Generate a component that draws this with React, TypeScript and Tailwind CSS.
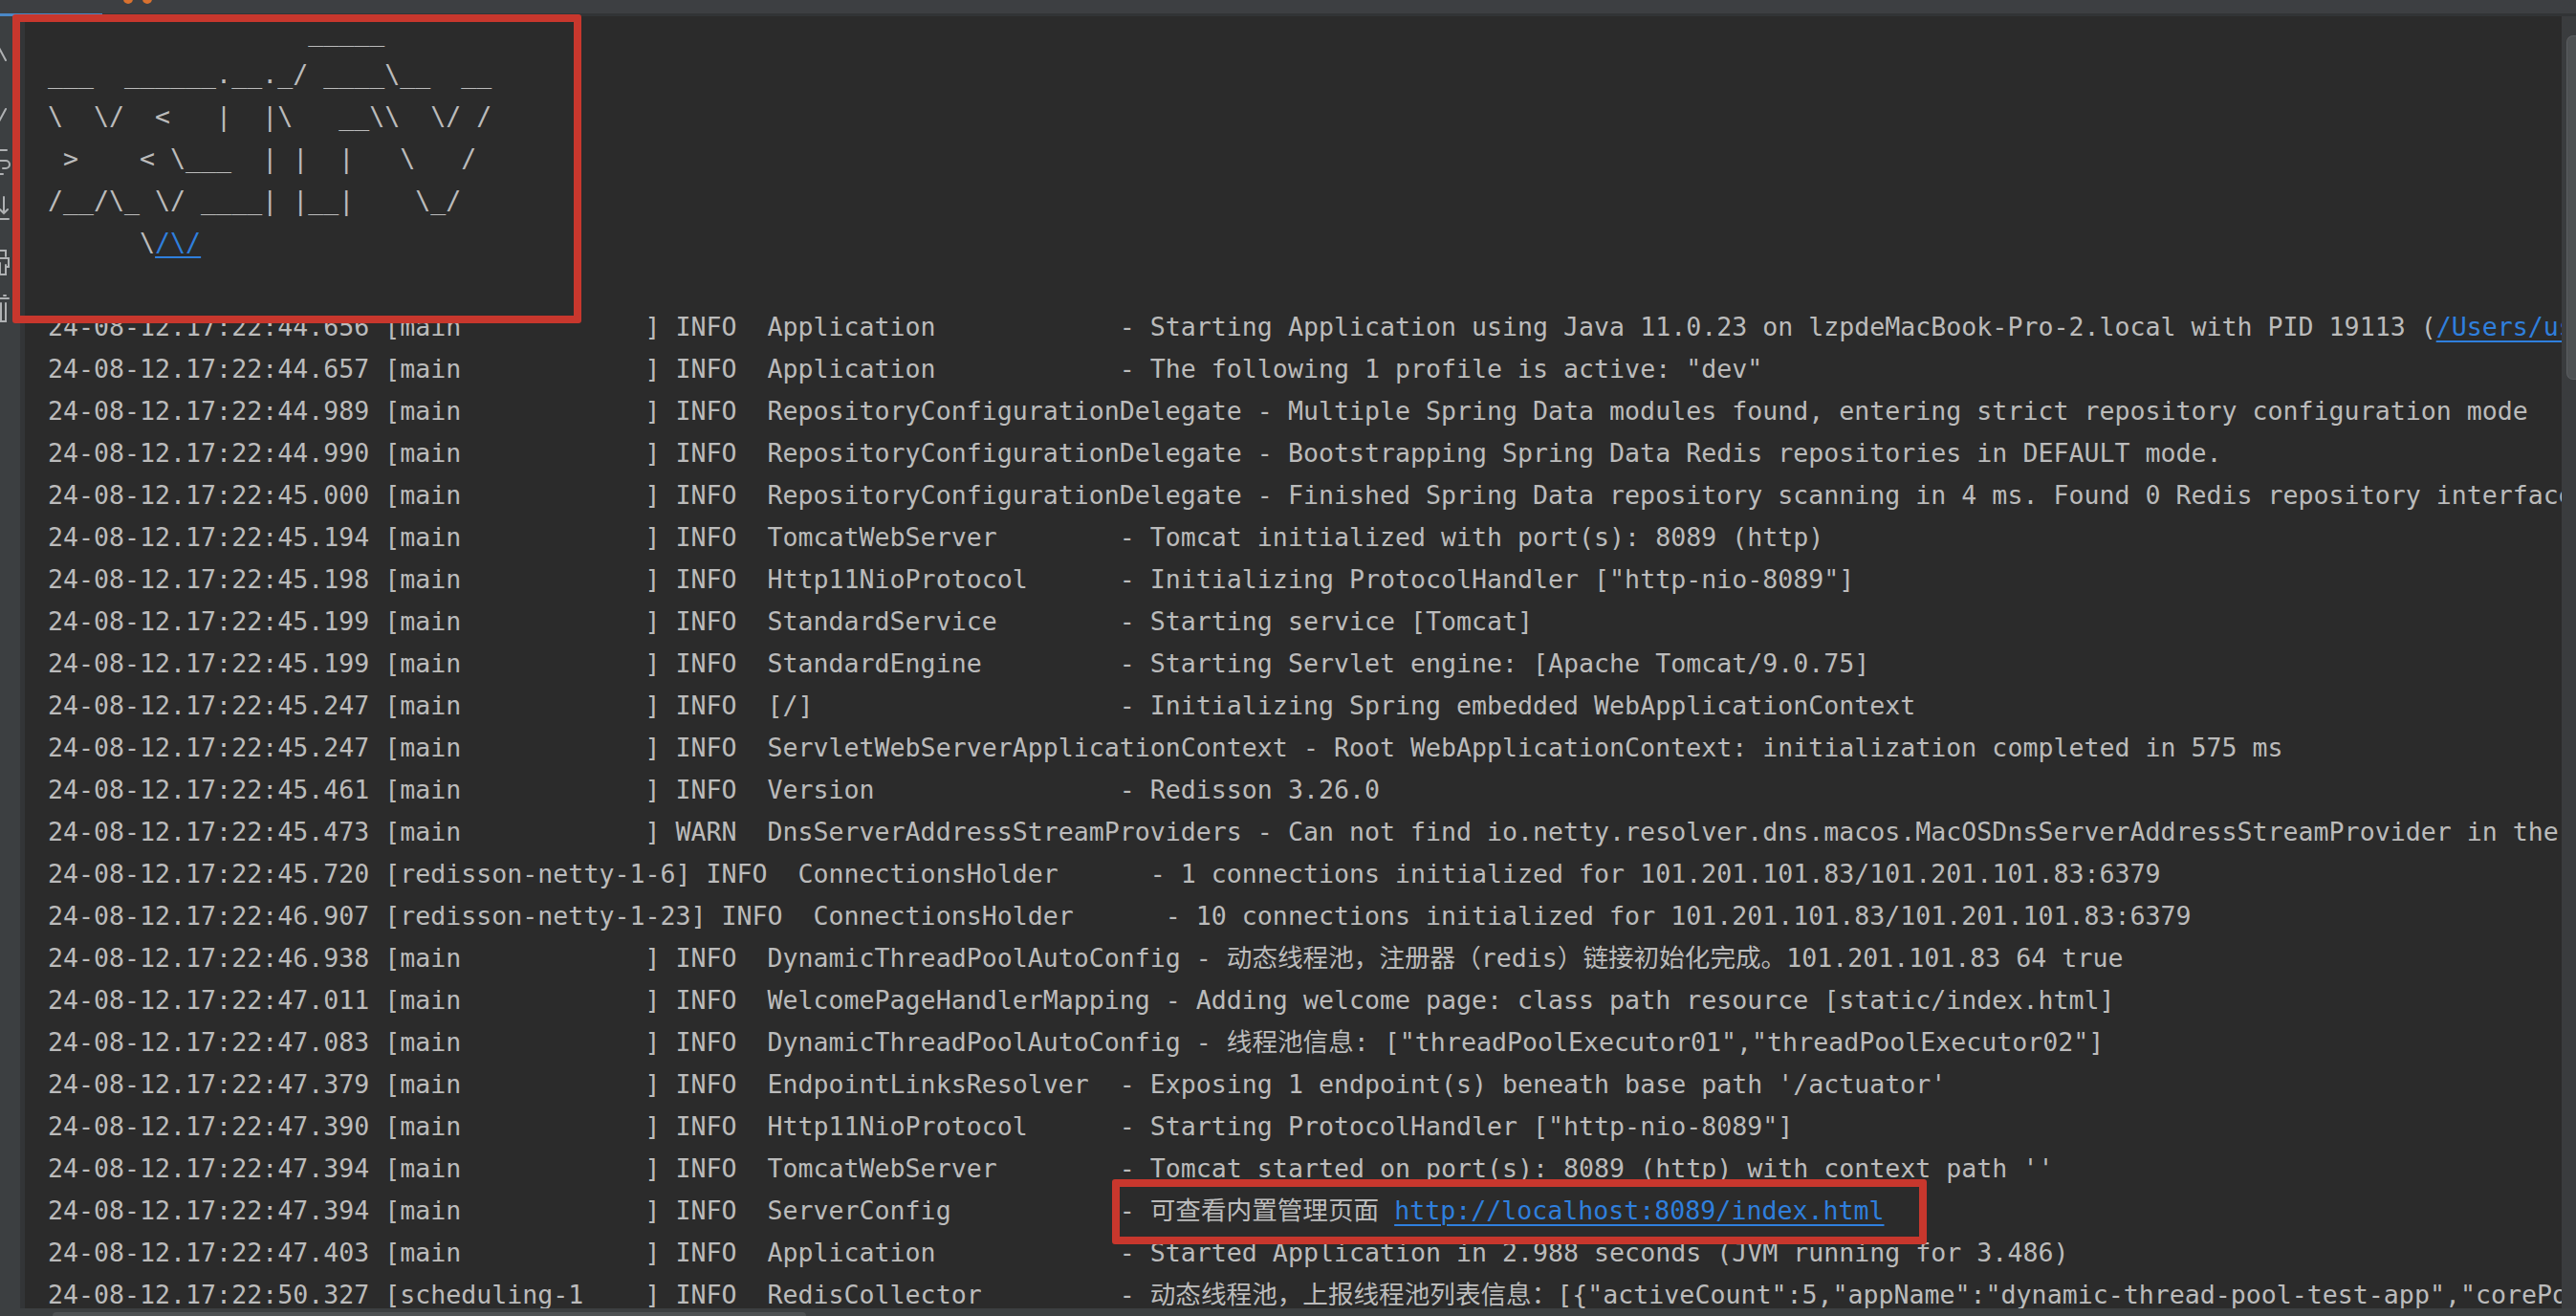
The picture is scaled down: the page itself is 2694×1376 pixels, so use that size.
import React from "react";

type Seg = string | { link: string };

const log = (
  ts: string,
  thread: string,
  level: string,
  logger: string,
  ...msg: Seg[]
): Seg[] => [
  `24-08-12.17:22:${ts} [${thread.padEnd(16)}] ${level.padEnd(5)} ${logger.padEnd(22)} - `,
  ...msg,
];

const lines: Seg[][] = [
  ["                 _____"],
  ["___  ______.__._/ ____\\__  __"],
  ["\\  \\/  <   |  |\\   __\\\\  \\/ /"],
  [" >    < \\___  | |  |   \\   /"],
  ["/__/\\_ \\/ ____| |__|    \\_/"],
  ["      \\", { link: "/\\/" }],
  [""],
  log(
    "44.656",
    "main",
    "INFO",
    "Application",
    "Starting Application using Java 11.0.23 on lzpdeMacBook-Pro-2.local with PID 19113 (",
    { link: "/Users/user/Documents/project/dynamic-thread-pool" },
    ")"
  ),
  log("44.657", "main", "INFO", "Application", 'The following 1 profile is active: "dev"'),
  log(
    "44.989",
    "main",
    "INFO",
    "RepositoryConfigurationDelegate",
    "Multiple Spring Data modules found, entering strict repository configuration mode"
  ),
  log(
    "44.990",
    "main",
    "INFO",
    "RepositoryConfigurationDelegate",
    "Bootstrapping Spring Data Redis repositories in DEFAULT mode."
  ),
  log(
    "45.000",
    "main",
    "INFO",
    "RepositoryConfigurationDelegate",
    "Finished Spring Data repository scanning in 4 ms. Found 0 Redis repository interfaces."
  ),
  log("45.194", "main", "INFO", "TomcatWebServer", "Tomcat initialized with port(s): 8089 (http)"),
  log("45.198", "main", "INFO", "Http11NioProtocol", 'Initializing ProtocolHandler ["http-nio-8089"]'),
  log("45.199", "main", "INFO", "StandardService", "Starting service [Tomcat]"),
  log("45.199", "main", "INFO", "StandardEngine", "Starting Servlet engine: [Apache Tomcat/9.0.75]"),
  log("45.247", "main", "INFO", "[/]", "Initializing Spring embedded WebApplicationContext"),
  log(
    "45.247",
    "main",
    "INFO",
    "ServletWebServerApplicationContext",
    "Root WebApplicationContext: initialization completed in 575 ms"
  ),
  log("45.461", "main", "INFO", "Version", "Redisson 3.26.0"),
  log(
    "45.473",
    "main",
    "WARN",
    "DnsServerAddressStreamProviders",
    "Can not find io.netty.resolver.dns.macos.MacOSDnsServerAddressStreamProvider in the classpath, fallback to system defaults."
  ),
  log(
    "45.720",
    "redisson-netty-1-6",
    "INFO",
    "ConnectionsHolder",
    "1 connections initialized for 101.201.101.83/101.201.101.83:6379"
  ),
  log(
    "46.907",
    "redisson-netty-1-23",
    "INFO",
    "ConnectionsHolder",
    "10 connections initialized for 101.201.101.83/101.201.101.83:6379"
  ),
  log(
    "46.938",
    "main",
    "INFO",
    "DynamicThreadPoolAutoConfig",
    "动态线程池，注册器（redis）链接初始化完成。101.201.101.83 64 true"
  ),
  log(
    "47.011",
    "main",
    "INFO",
    "WelcomePageHandlerMapping",
    "Adding welcome page: class path resource [static/index.html]"
  ),
  log(
    "47.083",
    "main",
    "INFO",
    "DynamicThreadPoolAutoConfig",
    '线程池信息: ["threadPoolExecutor01","threadPoolExecutor02"]'
  ),
  log(
    "47.379",
    "main",
    "INFO",
    "EndpointLinksResolver",
    "Exposing 1 endpoint(s) beneath base path '/actuator'"
  ),
  log("47.390", "main", "INFO", "Http11NioProtocol", 'Starting ProtocolHandler ["http-nio-8089"]'),
  log(
    "47.394",
    "main",
    "INFO",
    "TomcatWebServer",
    "Tomcat started on port(s): 8089 (http) with context path ''"
  ),
  log(
    "47.394",
    "main",
    "INFO",
    "ServerConfig",
    "可查看内置管理页面 ",
    { link: "http://localhost:8089/index.html" }
  ),
  log(
    "47.403",
    "main",
    "INFO",
    "Application",
    "Started Application in 2.988 seconds (JVM running for 3.486)"
  ),
  log(
    "50.327",
    "scheduling-1",
    "INFO",
    "RedisCollector",
    '动态线程池，上报线程池列表信息：[{"activeCount":5,"appName":"dynamic-thread-pool-test-app","corePoolSize":20,"maximumPoolSize":50}]'
  ),
];

function Toolbar() {
  return (
    <svg
      width="21"
      height="340"
      viewBox="0 0 21 340"
      fill="none"
      stroke="#afb1b3"
      strokeWidth="2"
      strokeLinecap="round"
      className="block"
    >
      <path d="M-1 33 L6 46" />
      <path d="M-1 110 L6 97" />
      <path d="M0 140 H7 M0 151 H6 A4 4 0 0 1 6 159 H3 M0 165 H3" />
      <path d="M4 189 V206 M0 202 L4 206 L8 202 M0 212 H9" />
      <path d="M0 245 H6 V251 M0 253 H9 V262 H6 M0 258 V270 H6 V260" />
      <path d="M0 295 H9 M4 292 H6 M1 300 V319 H6 V300" />
    </svg>
  );
}

export default function App() {
  return (
    <div className="relative w-[2694px] h-[1376px] overflow-hidden bg-[#2b2b2b] flex flex-col">
      <div className="h-[14px] shrink-0 bg-[#3d3f42]" />
      <div className="h-[3px] shrink-0 flex">
        <div className="w-[107px] bg-[#4a88c7]" />
        <div className="flex-1 bg-[#323436]" />
      </div>

      <div className="flex flex-1 min-h-0">
        <div className="w-[21px] shrink-0 bg-[#3c3f41] overflow-hidden">
          <Toolbar />
        </div>
        <div className="w-[5px] shrink-0 bg-[#333537]" />
        <div className="flex-1 min-w-0 overflow-hidden pl-[24px]">
          <div className="-mt-[5px] font-['DejaVu_Sans_Mono','Noto_Sans_CJK_SC',monospace] text-[26.6px] leading-[44px] text-[#bbbbbb] whitespace-pre">
            {lines.map((segs, i) => (
              <div key={i} className="h-[44px]">
                {segs.map((s, j) =>
                  typeof s === "string" ? (
                    <span key={j}>{s}</span>
                  ) : (
                    <span
                      key={j}
                      className="text-[#2f7fdd] underline decoration-[#2f7fdd] decoration-[2px] underline-offset-[5px]"
                    >
                      {s.link}
                    </span>
                  )
                )}
              </div>
            ))}
          </div>
        </div>
        <div className="w-[15px] shrink-0 bg-[#3a3c3e] pt-[20px] pl-[5px]">
          <div className="h-[360px] rounded-l-[7px] bg-[#4e5153] border border-r-0 border-[#5a5d60]" />
        </div>
      </div>

      {/* horizontal scrollbar overlay */}
      <div className="absolute left-0 right-0 bottom-0 h-[8px] bg-[#3c3f41] pl-[55px] pt-[4px]">
        <div className="w-[788px] h-[4px] rounded-t-[4px] bg-[#4e5153]" />
      </div>

      {/* orange dots at top edge */}
      <div className="absolute left-[129px] -top-[6px] w-[10px] h-[10px] rounded-full bg-[#d9712f]" />
      <div className="absolute left-[149px] -top-[6px] w-[10px] h-[10px] rounded-full bg-[#d9712f]" />

      {/* red annotation boxes */}
      <div className="absolute left-[13px] top-[15px] w-[595px] h-[323px] border-[8px] border-[#c8372d] rounded-[3px]" />
      <div className="absolute left-[1163px] top-[1233px] w-[852px] h-[68px] border-[8px] border-[#c8372d] rounded-[3px]" />
    </div>
  );
}
